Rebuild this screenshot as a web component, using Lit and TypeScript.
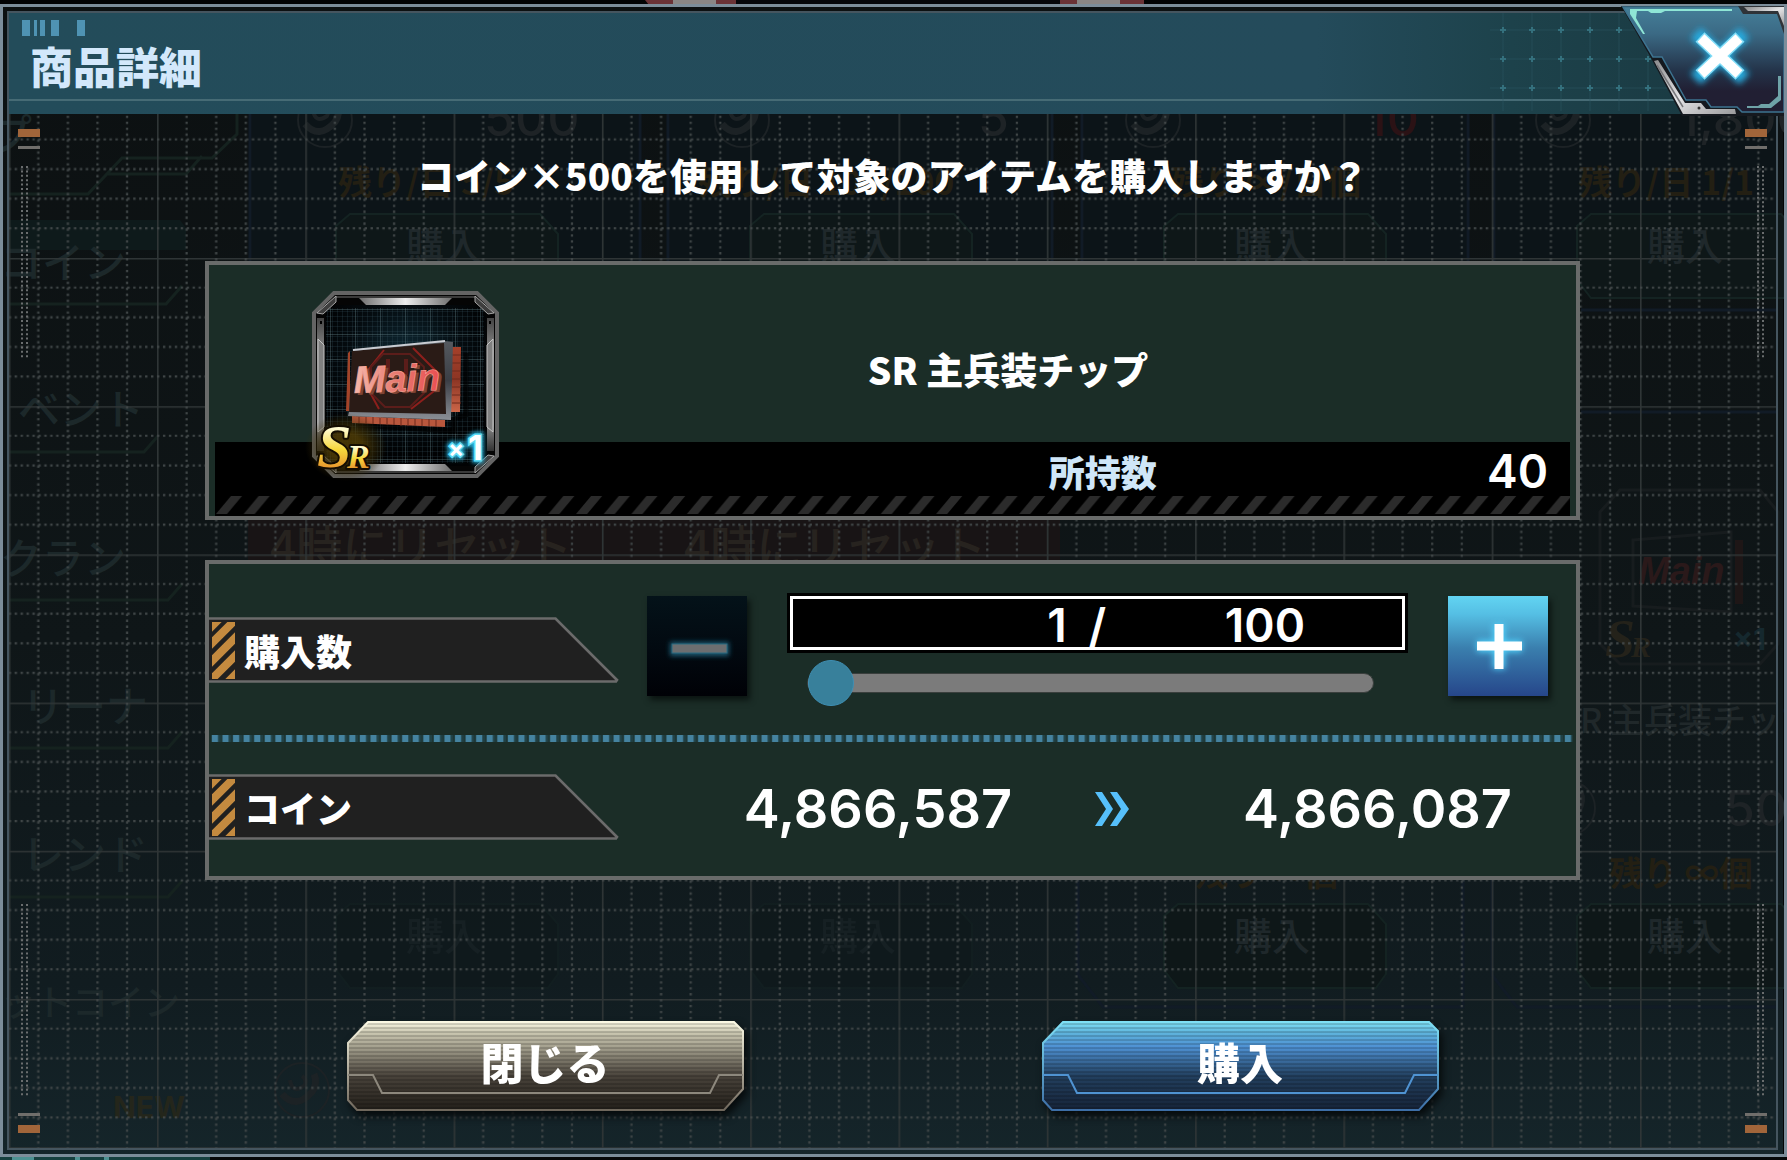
import { LitElement, html, svg, css } from "lit";
import { customElement, property, state } from "lit/decorators.js";

const JP = css`"Noto Sans CJK JP", "Noto Sans", sans-serif`;
const NUM = css`Inter, "Liberation Sans", sans-serif`;

/* Dimmed shop screen and blueprint grid that lie behind the dialog. */
@customElement("shop-backdrop")
export class ShopBackdrop extends LitElement {
  static styles = css`
    :host { position: absolute; inset: 0; display: block; }
    .scene { display: block; width: 100%; height: 100%; }
    .jp { font-family: ${JP}; font-weight: 500; font-size: 42px; }
    .jp .small { font-size: 36px; }
    .item { font-family: ${JP}; font-weight: 500; font-size: 34px; fill: #20282a; }
    .tag { font-family: ${JP}; font-weight: 700; font-size: 34px; fill: #231f13; }
    .num { font-family: ${NUM}; font-weight: 500; font-size: 50px; fill: #1e2326; }
    .new { font-family: ${NUM}; font-weight: 700; font-size: 30px; fill: #24261b; }
    .times { font-family: ${NUM}; font-weight: 700; font-size: 30px; fill: #15282e; }
    .menu { fill: #1c282a; }
    .buy { fill: #1f282b; font-size: 38px; }
    .faint { opacity: .4; }
    .alert { fill: #27231f; font-size: 46px; }
    .chip { font-family: "Liberation Sans", Arial, sans-serif; font-weight: 700; font-style: italic; font-size: 38px; fill: #2a191a; }
    .rank { font-family: "Liberation Serif", serif; font-weight: 700; font-style: italic; font-size: 54px; fill: #24221a; }
    .rank.low { font-size: 30px; }
  `;

  private coin(x: number, y: number) {
    return svg`<g fill="none" stroke="#1c2225" stroke-width="2">
      <circle cx=${x} cy=${y} r="27"/>
      <path stroke-width="7" d="M${x - 20} ${y + 4}q14 16 30-2q6-9 2-18"/>
      <path stroke-width="4" d="M${x - 12} ${y - 10}q2 14 14 6q4-6-2-10"/>
    </g>`;
  }

  private buyButton(x: number, y: number, faint = false) {
    return svg`<g class=${faint ? "faint" : ""}>
      <path d="M${x + 14} ${y}h190l18 20v50l-10 14h-198l-14-18v-54z" fill="#0e1718" stroke="#142322" stroke-width="2"/>
      <text class="jp buy" x=${x + 70} y=${y + 46}>購入</text>
    </g>`;
  }

  render() {
    return html`<svg class="scene" viewBox="0 0 1787 1160" preserveAspectRatio="xMidYMid slice" aria-hidden="true">
      <defs>
        <linearGradient id="shade" x1="0" y1="0" x2="0" y2="1">
          <stop offset="0" stop-color="#0c1011"/>
          <stop offset="0.55" stop-color="#0f1618"/>
          <stop offset="0.85" stop-color="#111c20"/>
          <stop offset="1" stop-color="#15252a"/>
        </linearGradient>
        <pattern id="cell" x="157" y="258" width="148.3" height="148.2" patternUnits="userSpaceOnUse">
          <path d="M0 .8H149M.8 0V149" stroke="#2f3536" stroke-width="1.6"/>
          <g stroke="#404647" stroke-width="2.2" stroke-dasharray="2.4 3.53">
            ${[1, 2, 3, 4].map((n) => svg`<path d="M0 ${n * 29.6}H149M${n * 29.6} 0V149"/>`)}
          </g>
        </pattern>
      </defs>
      <rect width="1787" height="1160" fill="#020304"/>
      <rect x="716" width="361" height="5" fill="#05060a"/>
      <path d="M645 0h28v5h-24zM716 0h20v5h-20zM1060 0h17v5h-17zM1120 0h24v5h-24z" fill="#6a3236"/>
      <rect x="673" width="43" height="5" fill="#8a8685"/>
      <rect x="1077" width="43" height="5" fill="#8a8685"/>
      <rect x="3" y="6" width="1780" height="1149" fill="url(#shade)"/>
      <g fill="none" stroke="#111b26" stroke-width="3">
        <path d="M250 114V262M640 114V262M668 114V262M1052 114V262M1082 114V262M1468 114V262M1494 114V262M1581 310H1778M1581 412H1778"/>
        <path d="M1078 880V975l25 32h360V880M1492 880V975l25 32h261"/>
      </g>
      <rect x="252" y="114" width="386" height="148" fill="#0c1418"/>
      <rect x="670" y="114" width="380" height="148" fill="#0c1418"/>
      <rect x="1084" y="114" width="382" height="148" fill="#0c1418"/>
      <rect x="1496" y="114" width="282" height="148" fill="#0c1418"/>
      <rect x="248" y="520" width="812" height="42" fill="#181415"/>
      <g fill="none" stroke="#15221f" stroke-width="3">
        <path d="M8 194H88l34-36h90l25-24V114M106 174h80l16-18"/>
        <path d="M8 304H166l16-18M8 452H144l14-16M8 600H168l14-16M8 748H168l14-16M8 897H168l14-16"/>
      </g>
      <path d="M8 220H180l6 8V250H8z" fill="#0e1a1b"/>
      <g class="jp menu">
        <text x="-10" y="150">プ</text>
        <text x="0" y="278">コイン</text>
        <text x="18" y="425">ベント</text>
        <text x="0" y="574">クラン</text>
        <text x="22" y="722">リーナ</text>
        <text x="22" y="870">レンド</text>
        <text class="small" x="0" y="1016">ットコイン</text>
      </g>
      <text class="new" x="113" y="1118">NEW</text>
      ${this.coin(325, 120)}${this.coin(742, 120)}${this.coin(1153, 120)}${this.coin(1563, 120)}
      ${this.coin(302, 1090)}${this.coin(1568, 808)}
      <g class="num">
        <text x="484" y="136">500</text>
        <text x="978" y="136">5</text>
        <text x="1366" y="136" fill="#2b1215">10</text>
        <text x="1678" y="136">1,800</text>
        <text x="1724" y="826">500</text>
      </g>
      <g class="tag">
        <text x="338" y="195">残り/日 5/5</text>
        <text x="698" y="195">残り/日 100/100</text>
        <text x="1170" y="195">残り ∞/日個</text>
        <text x="1578" y="195">残り/日 1/1</text>
        <text x="1194" y="886">残り ∞個</text>
        <text x="1609" y="886">残り ∞個</text>
      </g>
      ${this.buyButton(336, 214)}${this.buyButton(750, 214)}${this.buyButton(1164, 214)}${this.buyButton(1577, 214)}
      ${this.buyButton(336, 904, true)}${this.buyButton(750, 904, true)}${this.buyButton(1164, 904)}${this.buyButton(1577, 904)}
      <g class="jp">
        <text class="alert" x="270" y="564">4時にリセット</text>
        <text class="alert" x="684" y="564">4時にリセット</text>
      </g>
      <g fill="none" stroke="#171c1e" stroke-width="3">
        <path d="M1620 490h140l18 22v132l-18 20h-140l-20-20v-132z"/>
        <path d="M1633 540l98-8v80l-98-6z"/>
      </g>
      <rect x="1735" y="540" width="8" height="64" fill="#1e1616"/>
      <text class="chip" x="1638" y="584">Main</text>
      <text class="rank" x="1605" y="657">S</text>
      <text class="rank low" x="1631" y="657">R</text>
      <text class="times" x="1733" y="650">×1</text>
      <text class="item" x="1580" y="733">R 主兵装チップ</text>
      <rect x="9" y="114" width="1769" height="1034" fill="url(#cell)"/>
      <rect y="1157" width="1787" height="3" fill="#050708"/>
      <path d="M0 1157H210v3H0z" fill="#16403f"/>
      <path d="M12 1157h22v3h-22zM75 1157h5v3h-5zM104 1157h5v3h-5z" fill="#4c9192"/>
    </svg>`;
  }
}

/* Reward icon: framed tile with the weapon chip, its rank and its amount. */
@customElement("chip-icon")
export class ChipIcon extends LitElement {
  static styles = css`
    :host { display: block; }
    .tile { display: block; overflow: visible; }
    .name { font-family: "Liberation Sans", Arial, sans-serif; font-weight: 700; font-style: italic; font-size: 38px; }
    .rank { font-family: "Liberation Serif", serif; font-weight: 700; font-style: italic; paint-order: stroke; }
    .count { font-family: ${NUM}; font-weight: 700; fill: #fff; }
  `;

  render() {
    return html`<svg class="tile" width="187" height="187" viewBox="0 0 187 187" role="img" aria-label="SR Main ×1">
      <defs>
        <radialGradient id="screen" cx=".5" cy=".35" r=".6">
          <stop offset="0" stop-color="#0f2c38"/><stop offset="0.6" stop-color="#050c10"/><stop offset="1" stop-color="#010203"/>
        </radialGradient>
        <linearGradient id="steelH"><stop offset="0" stop-color="#6e6e6e"/><stop offset=".5" stop-color="#ededed"/><stop offset="1" stop-color="#6e6e6e"/></linearGradient>
        <linearGradient id="steelV" x1="0" y1="0" x2="0" y2="1"><stop offset="0" stop-color="#444"/><stop offset=".25" stop-color="#8a8a8a"/><stop offset=".5" stop-color="#666"/><stop offset=".8" stop-color="#8a8a8a"/><stop offset="1" stop-color="#333"/></linearGradient>
        <linearGradient id="edge" x1="0" y1="0" x2="0" y2="1"><stop offset="0" stop-color="#55595f"/><stop offset=".5" stop-color="#3b3e45"/><stop offset="1" stop-color="#8b8f96"/></linearGradient>
        <linearGradient id="copper" x1="0" y1="0" x2="0" y2="1"><stop offset="0" stop-color="#a5402a"/><stop offset=".5" stop-color="#8c3524"/><stop offset="1" stop-color="#cc6648"/></linearGradient>
        <linearGradient id="pink"><stop offset="0" stop-color="#f5b8ab"/><stop offset=".5" stop-color="#e87a70"/><stop offset="1" stop-color="#ea4f52"/></linearGradient>
        <linearGradient id="gold" x1="0" y1="0" x2="0" y2="1"><stop offset=".25" stop-color="#fffbd0"/><stop offset=".55" stop-color="#f6d83c"/><stop offset=".85" stop-color="#e8912c"/></linearGradient>
        <radialGradient id="halo"><stop offset=".4" stop-color="#4a3805" stop-opacity=".9"/><stop offset="1" stop-color="#3a2c04" stop-opacity="0"/></radialGradient>
        <pattern id="fine" width="5" height="5" patternUnits="userSpaceOnUse"><path d="M0 .5H5M.5 0V5" stroke="#35505a" stroke-opacity=".25"/></pattern>
        <pattern id="coarse" x="18" y="18" width="25" height="25" patternUnits="userSpaceOnUse"><path d="M0 .5H25M.5 0V25" stroke="#6b8890" stroke-opacity=".35"/></pattern>
        <filter id="glow" x="-50%" y="-50%" width="200%" height="200%"><feGaussianBlur stdDeviation="2"/></filter>
      </defs>
      <path d="M22 2H165L185 22V165L165 185H22L2 165V22Z" fill="#050505" stroke="#646464" stroke-width="4"/>
      <rect x="13" y="14" width="161" height="161" rx="10" fill="url(#screen)"/>
      <rect x="14" y="17" width="158" height="155" fill="url(#fine)"/>
      <rect x="14" y="17" width="158" height="155" fill="url(#coarse)"/>
      <path d="M24 6H163M24 181H163" stroke="#707070" stroke-width="1"/>
      <path d="M47 7H140L133 14H54Z" fill="url(#steelH)"/>
      <path d="M54 173H133L140 180H47Z" fill="url(#steelH)"/>
      <path d="M5 27H12V160H5ZM175 27H182V160H175Z" fill="url(#steelV)"/>
      <path d="M6 48L12 54V136L6 141ZM181 48L175 54V136L181 141Z" fill="#808080" stroke="#c4c4c4" stroke-width="1"/>
      <path d="M5 22L24 5V11L11 23ZM182 22L163 5V11L176 23ZM5 165L24 182V176L11 164ZM182 165L163 182V176L176 164Z" fill="#3e3e3e" stroke="#a6a6a6" stroke-width="1"/>
      <rect x="8" y="30" width="2" height="3"/><rect x="177" y="30" width="2" height="3"/>

      <path d="M44 134L142 140V128L154 124V62" fill="none" stroke="#000" stroke-opacity=".6" stroke-width="5"/>
      <path d="M139 56H149L148 121H139Z" fill="url(#copper)"/>
      <path d="M40 125L133 129V136L40 132Z" fill="#b9573d"/>
      <path d="M47 126v6M54 126v7M61 126v7M68 127v6M75 127v7M82 127v7M89 127v8M96 128v7M103 128v7M110 128v7M117 128v7M124 129v7M140 64h9M140 72h9M140 80h9M140 88h9M140 96h9M140 104h9M140 112h9" stroke="#6e2a1c" stroke-width="1"/>
      <path d="M36 62L38 60V120H34Z" fill="#a34429"/>
      <path d="M41 59L133 50L141 51L139 129L36 125L37 120Z" fill="url(#edge)"/>
      <path d="M40 60L132 52L134 123L37 121Z" fill="#2a1b16"/>
      <path d="M41 59L133 50" stroke="#c9ccd2" stroke-width="2"/>
      <g fill="none" stroke="#8d1f1c" stroke-width="2">
        <path d="M72 59L56 79M54 94L67 118M101 57L124 80M126 97L99 118"/>
        <path d="M71 63H98L112 76V102L98 116H73L59 102V76Z" stroke="#5b1d1a"/>
        <path d="M76 68V84M94 68V84" stroke="#5b1d1a" stroke-width="4"/>
      </g>
      <g transform="rotate(-2 42 101)">
        <text class="name" x="45" y="104" fill="#7d4434">Main</text>
        <text class="name" x="42" y="102" fill="url(#pink)" stroke="#f5a59a" stroke-width=".6">Main</text>
      </g>

      <ellipse cx="34" cy="156" rx="41" ry="34" fill="url(#halo)"/>
      <g fill="url(#gold)" stroke="#140d02" stroke-width="4" stroke-linejoin="round">
        <text class="rank" x="5" y="176" font-size="62">S</text>
        <text class="rank" x="35" y="177" font-size="34">R</text>
      </g>
      <g class="count">
        <g stroke="#27b4dc" stroke-width="6" filter="url(#glow)"><text x="136" y="166" font-size="24">×</text><text x="156" y="169" font-size="34">1</text></g>
        <g stroke="#5fdcf5" stroke-width="3" paint-order="stroke"><text x="136" y="166" font-size="24">×</text><text x="156" y="169" font-size="34">1</text></g>
      </g>
    </svg>`;
  }
}

/* Left/right edge ornament: bars at both ends and two dotted scales. */
@customElement("edge-rail")
export class EdgeRail extends LitElement {
  static styles = css`
    :host { display: flex; flex-direction: column; justify-content: space-between; width: 22px; }
    .end { display: flex; flex-direction: column; gap: 9px; }
    .end.low { flex-direction: column-reverse; }
    .bar { height: 8px; background: #a1653a; }
    .tick { height: 3px; background: #706e6b; }
    .dots { width: 8px; height: 192px; margin: 8px 0 0 3px; }
    .dots.right { margin-left: 12px; }
    .low .dots { margin-top: 0; margin-bottom: 8px; }
    svg { display: block; }
  `;
  @property({ type: Boolean }) mirrored = false;

  private end(low: boolean) {
    return html`<div class="end ${low ? "low" : ""}">
      <div class="bar"></div>
      <div class="tick"></div>
      <svg class="dots ${this.mirrored ? "right" : ""}" viewBox="0 0 8 192" aria-hidden="true">
        <path d="M1 0V192M6 0V192" stroke="#6a6d6e" stroke-width="2" stroke-dasharray="2 2.4"/>
      </svg>
    </div>`;
  }

  render() {
    return html`${this.end(false)}${this.end(true)}`;
  }
}

@customElement("app-root")
export class AppRoot extends LitElement {
  static styles = css`
    :host { display: block; color: #fff; font-family: ${JP}; font-weight: 700; }
    * { box-sizing: border-box; }
    h1, h2, p { margin: 0; font-size: inherit; font-weight: inherit; }
    svg { display: block; }
    button { border: 0; padding: 0; background: none; color: inherit; font: inherit; cursor: pointer; }

    .stage { position: relative; display: flex; min-height: 100vh; padding: 4px 0 3px; overflow: hidden; background: #020304; }
    .frame { position: relative; display: flex; flex: 1; padding: 4px 6px 4px 4px; border: 3px solid #7c8d9a; }
    .inner { display: flex; flex: 1; flex-direction: column; min-width: 0; border: 2px solid #45555f; }

    .head { position: relative; display: flex; height: 101px; background: linear-gradient(90deg, #234c5a 0%, #244b5b 74%, #1d424b 85%, #19373f 100%); }
    .title-block { display: flex; flex: 1; flex-direction: column; padding: 7px 0 0 13px; border-bottom: 2px solid #466b75; margin-bottom: 13px; }
    .title { margin-left: 8px; color: #d3e8fb; font-size: 43px; font-weight: 900; line-height: 58px; }
    .stars { position: absolute; top: 0; right: 0; width: 290px; height: 101px; }
    .close { position: absolute; top: -1px; right: 0; width: 163px; height: 110px; }

    .body { display: flex; flex: 1; padding: 15px 9px; }
    .content { display: flex; flex: 1; flex-direction: column; min-width: 0; padding: 18px 165px 0; }
    .prompt { font-size: 37px; font-weight: 900; line-height: 56px; text-align: center; white-space: nowrap; }

    .panel { border: 4px solid #696b6a; background: #1b2d27; }
    .item { display: grid; grid-template-columns: 231px 1fr; grid-template-rows: 177px 74px; margin-top: 58px; }
    .item-icon { grid-area: 1 / 1 / 3 / 2; z-index: 1; padding: 26px 0 0 103px; }
    .item-name { grid-area: 1 / 2; padding-top: 34px; font-size: 37px; font-weight: 900; line-height: 140px; text-align: center; }
    .owned { grid-area: 2 / 1 / 3 / 3; display: flex; flex-direction: column; margin: 0 6px; background: #000; }
    .owned-row { display: grid; grid-template-columns: 8fr 5fr; flex: 1; align-items: center; padding-top: 4px; line-height: 50px; }
    .owned-label { grid-column: 2; grid-row: 1; color: #cfe6f8; font-size: 36px; font-weight: 900; }
    .owned-value { grid-column: 2; grid-row: 1; justify-self: end; padding-right: 22px; font-family: ${NUM}; font-size: 46px; font-weight: 600; }
    .hazard { width: 100%; height: 20px; }

    .order { display: grid; grid-template-rows: 171px 7px 134px; margin-top: 40px; }
    .row { display: grid; grid-template-columns: 410px 1fr; align-items: center; }
    .row.total { padding-bottom: 5px; }
    .tab { display: grid; align-items: center; height: 66px; font-size: 36px; font-weight: 900; }
    .tab > * { grid-area: 1 / 1; }
    .tab-text { padding-left: 35px; line-height: 60px; }
    .rule { width: 100%; height: 7px; }

    .stepper { display: grid; grid-template-columns: 100px 1fr 100px; gap: 40px; align-items: start; padding: 0 28px; }
    .step { width: 100px; height: 100px; margin-top: 3px; box-shadow: 3px 4px 6px #0b1411; }
    .plus { background: linear-gradient(#62d4f2 0%, #55bfe4 18%, #3a7fae 52%, #26468a 100%); }
    .minus { background: linear-gradient(#041219 0%, #020910 55%, #000106 100%); }
    .amount { display: flex; align-items: center; height: 60px; border: 3px solid #000; outline: 3px solid #fff; outline-offset: -6px; background: #000; font-family: ${NUM}; font-size: 46px; font-weight: 600; line-height: 50px; }
    .amount-input { width: 45%; height: 48px; padding: 4px 0 0; border: 0; outline: 0; background: none; color: inherit; font: inherit; text-align: right; }
    .slash { padding: 4px 0 0 22px; }
    .limit { padding-top: 4px; margin: 0 100px 0 auto; }

    .slider { display: block; width: calc(100% - 54px); height: 46px; margin: 7px 34px 0 20px; appearance: none; background: none; cursor: pointer; }
    .slider::-webkit-slider-runnable-track { height: 20px; border: 1px solid #3a3f3d; border-radius: 10px; background: #7b7b7b; }
    .slider::-webkit-slider-thumb { appearance: none; width: 46px; height: 46px; margin-top: -14px; border: 1px solid #3f8fb4; border-radius: 50%; background: #38809b; }

    .totals { display: grid; grid-template-columns: 434px 34px 1fr; align-items: center; padding: 4px 0 0 42px; font-family: ${NUM}; font-size: 54px; font-weight: 600; line-height: 60px; text-align: center; }
    .after { padding-left: 50px; }

    .actions { display: flex; justify-content: center; gap: 298px; margin-top: 141px; }
    .action { display: grid; width: 397px; filter: drop-shadow(3px 5px 4px #05090a); font-size: 43px; font-weight: 900; }
    .action > * { grid-area: 1 / 1; }
    .action-text { align-self: start; line-height: 80px; }
  `;

  @state() private count = 1;
  private readonly limit = 100;
  private readonly price = 500;
  private readonly coins = 4866587;

  private setCount(value: number) {
    this.count = Math.min(this.limit, Math.max(1, Math.round(value) || 1));
  }

  private onInput(event: Event) {
    this.setCount(Number((event.target as HTMLInputElement).value));
  }

  private closeIcon() {
    return html`<svg width="163" height="110" viewBox="0 0 163 110" aria-hidden="true">
      <defs>
        <linearGradient id="face" x1="0" y1="0" x2="0" y2="1"><stop offset="0" stop-color="#457f99"/><stop offset=".25" stop-color="#3b6a85"/><stop offset=".6" stop-color="#24344a"/><stop offset=".8" stop-color="#211f33"/></linearGradient>
        <linearGradient id="metal" x1="0" y1="0" x2="1" y2="1"><stop offset="0" stop-color="#8b8b8d"/><stop offset=".5" stop-color="#e4e4e6"/><stop offset="1" stop-color="#9a9a9c"/></linearGradient>
        <filter id="halo" x="-50%" y="-50%" width="200%" height="200%"><feGaussianBlur stdDeviation="3"/></filter>
      </defs>
      <path d="M0 0H163V110H61L30 52Z" fill="#15191f"/>
      <path d="M2 1H163V106H121L116 101H90L85 94H65L41 51H32Z" fill="url(#face)" stroke="#3d7390" stroke-width="1.5"/>
      <path d="M33 55L37 54L64 97H80L85 103H114L115 108H62Z" fill="url(#metal)"/>
      <path d="M36 59L62 101" stroke="#77777b" stroke-width="1.5"/>
      <circle cx="78" cy="102" r="1.5" fill="#333"/>
      <path d="M117 0H163V28L156 8H122Z" fill="#2f3338"/>
      <path d="M123 1H163V20L157 5H127Z" fill="url(#metal)"/>
      <path d="M9 3H111V5H44L40 7H30L27 5H16L15 12L24 28H22L9 8Z" fill="#8fe6d6"/>
      <path d="M160 70V94L150 102H126V100H137L140 98H148L157 90V70Z" fill="#6fa3a8"/>
      <g fill="none" stroke-width="10">
        <path d="M80 32L118 68M118 32L80 68" stroke="#27a9dc" stroke-width="15" stroke-linecap="square" filter="url(#halo)"/>
        <path d="M79 31L119 69M119 31L79 69" stroke="#7fdcf7" stroke-width="13"/>
        <path d="M80 32L118 68M118 32L80 68" stroke="#fff"/>
      </g>
    </svg>`;
  }

  private tab(label: string) {
    return html`<svg width="410" height="66" viewBox="0 0 410 66" aria-hidden="true">
      <path d="M-2 1.5H346.5L408 63L407 64.5H-2Z" fill="#202020" stroke="#6b6b6b" stroke-width="2.6"/>
      <clipPath id="cut"><rect x="3" y="5" width="23" height="57"/></clipPath>
      <path clip-path="url(#cut)" d="M-6 18L22 -10M-6 35L34 -5M-6 53L34 13M-6 71L34 31M14 70L34 50" stroke="#c48a3f" stroke-width="8"/>
    </svg><span class="tab-text">${label}</span>`;
  }

  private actionShape(id: string, stops: string[], line: string, rim: string) {
    return html`<svg width="397" height="91" viewBox="0 0 397 91" aria-hidden="true">
      <defs>
        <linearGradient id=${id} x1="0" y1="0" x2="0" y2="1">
          ${stops.map((color, i) => svg`<stop offset=${[0, 0.12, 0.28, 0.62, 1][i]} stop-color=${color}/>`)}
        </linearGradient>
        <linearGradient id=${id + "-rim"} x1="0" y1="0" x2="0" y2="1">
          <stop offset="0" stop-color=${stops[0]}/><stop offset="1" stop-color=${rim}/>
        </linearGradient>
        <pattern id=${id + "-scan"} width="8" height="4" patternUnits="userSpaceOnUse"><path d="M0 3H8" stroke="#000" stroke-opacity=".2" stroke-width="1.5"/></pattern>
      </defs>
      <path d="M21 1H387L396 10V68L377 89H10L1 79V22Z" fill="url(#${id})"/>
      <path d="M21 1H387L396 10V68L377 89H10L1 79V22Z" fill="url(#${id}-scan)" stroke="url(#${id}-rim)" stroke-width="2"/>
      <path d="M1 54H26L35 72H363L372 54H396" fill="none" stroke=${line} stroke-width="2"/>
    </svg>`;
  }

  render() {
    const left = this.coins - this.count * this.price;
    return html`
      <main class="stage" lang="ja">
        <shop-backdrop></shop-backdrop>
        <section class="frame" role="dialog" aria-labelledby="title">
          <div class="inner">
            <header class="head">
              <svg class="stars" viewBox="0 0 290 101" aria-hidden="true">
                <path d="M4 17H290M4 46H290M4 75H290M17 0V98M46 0V98M75 0V98M104 0V98M133 0V98M162 0V98" fill="none" stroke="#2b5a65" stroke-opacity=".5"/>
                ${[17, 46, 75, 104, 133, 162].map((x) => [17, 46, 75].map((y) => svg`<path d="M${x - 3} ${y}h6M${x} ${y - 3}v6" stroke="#34707d" stroke-width="2"/>`))}
              </svg>
              <div class="title-block">
                <svg width="64" height="16" viewBox="0 0 64 16" aria-hidden="true">
                  <path d="M0 0h8v16h-8zM12 0h3v16h-3zM18 0h5v16h-5zM29 0h8v16h-8zM55 0h8v16h-8z" fill="#4f93b3"/>
                </svg>
                <h1 class="title" id="title">商品詳細</h1>
              </div>
            </header>

            <div class="body">
              <edge-rail></edge-rail>
              <div class="content">
                <p class="prompt">コイン×500を使用して対象のアイテムを購入しますか？</p>

                <section class="panel item">
                  <chip-icon class="item-icon"></chip-icon>
                  <h2 class="item-name">SR 主兵装チップ</h2>
                  <div class="owned">
                    <div class="owned-row">
                      <span class="owned-label">所持数</span>
                      <span class="owned-value">40</span>
                    </div>
                    <svg class="hazard" aria-hidden="true">
                      <defs><pattern id="slant" width="27.7" height="18" patternUnits="userSpaceOnUse"><path d="M1 18L16 0H27L12 18Z" fill="#2b2b2b"/></pattern></defs>
                      <rect width="100%" height="18" fill="url(#slant)"/>
                    </svg>
                  </div>
                </section>

                <section class="panel order">
                  <div class="row">
                    <label class="tab" for="count">${this.tab("購入数")}</label>
                    <div class="stepper">
                      <button class="step minus" aria-label="減らす" @click=${() => this.setCount(this.count - 1)}>
                        <svg width="100" height="100" viewBox="0 0 100 100" aria-hidden="true">
                          <defs><filter id="soft" x="-50%" y="-200%" width="200%" height="500%"><feGaussianBlur stdDeviation="2.5"/></filter></defs>
                          <rect x="23" y="46" width="59" height="14" fill="#1f5a72" filter="url(#soft)"/>
                          <rect x="25" y="48" width="55" height="9" fill="#6c6e70" stroke="#2b6a80"/>
                        </svg>
                      </button>
                      <div>
                        <div class="amount">
                          <input class="amount-input" id="count" type="text" inputmode="numeric" .value=${String(this.count)} @change=${this.onInput} />
                          <span class="slash">/</span>
                          <span class="limit">${this.limit}</span>
                        </div>
                        <input class="slider" type="range" min="1" max=${this.limit} .value=${String(this.count)} aria-label="購入数" @input=${this.onInput} />
                      </div>
                      <button class="step plus" aria-label="増やす" @click=${() => this.setCount(this.count + 1)}>
                        <svg width="100" height="100" viewBox="0 0 100 100" aria-hidden="true">
                          <defs><filter id="bloom" x="-50%" y="-50%" width="200%" height="200%"><feGaussianBlur stdDeviation="3"/></filter></defs>
                          <path d="M51 28V73M29 50H74" stroke="#4fd0fa" stroke-width="12" filter="url(#bloom)"/>
                          <path d="M51 28V73M29 50H74" stroke="#fff" stroke-width="9"/>
                        </svg>
                      </button>
                    </div>
                  </div>

                  <svg class="rule" aria-hidden="true">
                    <defs><pattern id="beads" x="2" width="10.57" height="7" patternUnits="userSpaceOnUse"><rect width="10" height="7" fill="#24505a" opacity=".55"/><rect x="1" width="6" height="7" fill="#4583a0"/></pattern></defs>
                    <rect x="2" width="99.6%" height="7" fill="url(#beads)"/>
                  </svg>

                  <div class="row total">
                    <div class="tab">${this.tab("コイン")}</div>
                    <div class="totals">
                      <span>${this.coins.toLocaleString("en-US")}</span>
                      <svg width="34" height="36" viewBox="0 0 34 36" aria-hidden="true">
                        <path d="M0 1H7L18 18L7 35H0L11 18ZM15 1H22L34 18L22 35H15L26 18Z" fill="#56c0fb"/>
                      </svg>
                      <span class="after">${left.toLocaleString("en-US")}</span>
                    </div>
                  </div>
                </section>

                <div class="actions">
                  <button class="action">
                    ${this.actionShape("sand", ["#fbf9e4", "#c9c6b0", "#a5a18f", "#48423a", "#231f1a"], "#8d887d", "#6f675c")}
                    <span class="action-text">閉じる</span>
                  </button>
                  <button class="action">
                    ${this.actionShape("sea", ["#7fe0f5", "#5fb4dc", "#4f92d4", "#223f5e", "#162338"], "#4f93d2", "#3d6ea6")}
                    <span class="action-text">購入</span>
                  </button>
                </div>
              </div>
              <edge-rail mirrored></edge-rail>
            </div>
          </div>
          <button class="close" aria-label="閉じる">${this.closeIcon()}</button>
        </section>
      </main>
    `;
  }
}
